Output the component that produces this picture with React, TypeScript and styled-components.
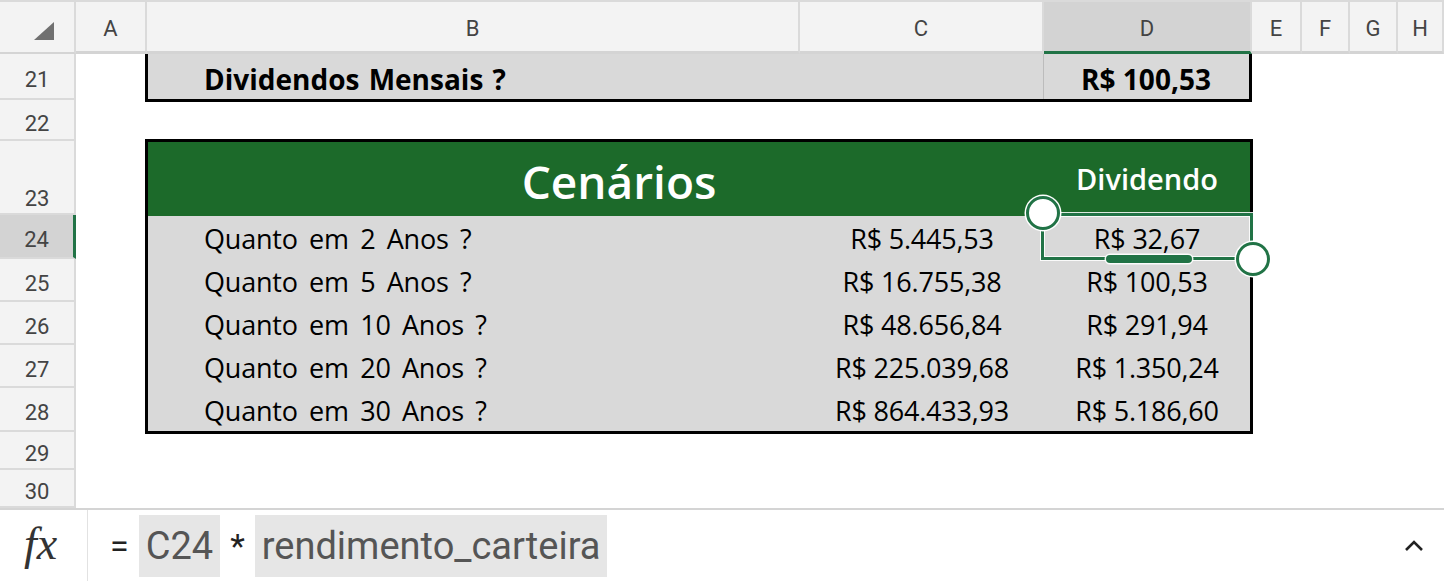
import React from "react";
import styled, { createGlobalStyle, css } from "styled-components";

const Global = createGlobalStyle`
  html, body { margin: 0; padding: 0; background: #ffffff; }
  body { width: 1444px; height: 581px; overflow: hidden; font-family: Roboto, "Noto Sans", sans-serif; }
  #root { width: 1444px; height: 581px; display: flex; flex-direction: column; }
`;

const GREEN = "#217346";
const HEAD_GREEN = "#1c6a2a";
const CELL_FONT = `"Open Sans", "Noto Sans", sans-serif`;

const COL_WIDTHS = [76, 71, 653, 244, 208, 50, 48, 48, 46];
const ROW_HEIGHTS = [54, 46, 41, 74, 44, 43, 43, 43, 44, 38, 38];

const Sheet = styled.div`
  position: relative;
  display: grid;
  grid-template-columns: ${COL_WIDTHS.map((w) => `${w}px`).join(" ")};
  grid-template-rows: ${ROW_HEIGHTS.map((h) => `${h}px`).join(" ")};
  height: 508px;
  overflow: hidden;
  background: #fff;
`;

const Corner = styled.div`
  grid-column: 1;
  grid-row: 1;
  background: #f3f3f3;
  border-top: 2px solid #dadada;
  border-right: 2px solid #dadada;
  border-bottom: 2px solid #d4d4d4;
  box-sizing: border-box;
  display: flex;
  align-items: center;
  justify-content: center;
`;

const ColHead = styled.div<{ $col: number; $active?: boolean }>`
  grid-column: ${(p) => p.$col};
  grid-row: 1;
  box-sizing: border-box;
  border-top: 2px solid #dadada;
  border-right: 2px solid #dadada;
  border-bottom: 3px solid ${(p) => (p.$active ? GREEN : "#d4d4d4")};
  background: ${(p) => (p.$active ? "#d3d3d3" : "#f3f3f3")};
  color: #444;
  font-family: Roboto, sans-serif;
  font-size: 22px;
  display: flex;
  align-items: center;
  justify-content: center;
  padding-top: 4px;
`;

const RowHead = styled.div<{ $row: number; $active?: boolean; $tall?: boolean }>`
  grid-column: 1;
  grid-row: ${(p) => p.$row};
  box-sizing: border-box;
  border-bottom: 2px solid #dadada;
  border-right: ${(p) => (p.$active ? `3px solid ${GREEN}` : "2px solid #dadada")};
  background: ${(p) => (p.$active ? "#d3d3d3" : "#f3f3f3")};
  color: #444;
  font-family: Roboto, sans-serif;
  font-size: 22px;
  line-height: 1;
  display: flex;
  justify-content: center;
  align-items: ${(p) => (p.$tall ? "flex-end" : "center")};
  padding: ${(p) => (p.$tall ? "0 0 3px 0" : "8px 0 0 0")};
`;

const SummaryTable = styled.div`
  grid-column: 3 / 6;
  grid-row: 2;
  align-self: start;
  margin-left: -2px;
  width: 1101px;
  height: 45px;
  border: 3px solid #000;
  border-top: none;
  background: #d9d9d9;
  display: grid;
  grid-template-columns: 652px 243px 206px;
  font-family: ${CELL_FONT};
  color: #000;
`;

const ScenarioTable = styled.div`
  grid-column: 3 / 6;
  grid-row: 4 / 10;
  align-self: start;
  margin: -2px 0 0 -2px;
  width: 1102px;
  border: 3px solid #000;
  background: #d9d9d9;
  display: grid;
  grid-template-columns: 652px 244px 206px;
  grid-template-rows: 74px 44px 43px 43px 43px 42px;
  font-family: ${CELL_FONT};
  color: #000;
`;

const Cell = styled.div<{ $align?: "left" | "center"; $bold?: boolean; $divider?: boolean }>`
  display: flex;
  align-items: center;
  justify-content: ${(p) => (p.$align === "left" ? "flex-start" : "center")};
  padding-left: ${(p) => (p.$align === "left" ? "56px" : "0")};
  padding-top: ${(p) => (p.$bold ? "5px" : "0")};
  font-size: ${(p) => (p.$bold ? "28px" : "27px")};
  word-spacing: ${(p) => (p.$align === "left" ? (p.$bold ? "2px" : "4.5px") : "0")};
  font-weight: ${(p) => (p.$bold ? 700 : 400)};
  letter-spacing: ${(p) => (p.$bold ? "0" : "-0.2px")};
  white-space: nowrap;
  ${(p) =>
    p.$divider &&
    css`
      box-shadow: inset 1px 0 0 #bcbcbc;
    `}
`;

const HeaderBand = styled.div`
  grid-column: 1 / 4;
  grid-row: 1;
  background: ${HEAD_GREEN};
  display: grid;
  grid-template-columns: 896px 206px;
  color: #fff;
`;

const Title = styled.div`
  display: flex;
  align-items: center;
  justify-content: center;
  padding-left: 46px;
  font-size: 46px;
  font-weight: 600;
  padding-top: 4px;
`;

const SubTitle = styled.div`
  display: flex;
  align-items: center;
  justify-content: center;
  font-size: 29px;
  font-weight: 600;
  padding-bottom: 1px;
`;

const SelectionBox = styled.div`
  position: absolute;
  left: 1041px;
  top: 213px;
  width: 212px;
  height: 47px;
  box-sizing: border-box;
  border: 3px solid ${GREEN};
  box-shadow: 0 0 0 1px rgba(255, 255, 255, 0.85), inset 0 0 0 1px rgba(255, 255, 255, 0.85);
  pointer-events: none;
`;

const Handle = styled.div<{ $x: number; $y: number }>`
  position: absolute;
  left: ${(p) => p.$x - 17}px;
  top: ${(p) => p.$y - 17}px;
  width: 34px;
  height: 34px;
  box-sizing: border-box;
  border-radius: 50%;
  background: #fff;
  border: 3px solid ${GREEN};
  box-shadow: 0 0 0 1.5px #fff;
`;

const FillBar = styled.div`
  position: absolute;
  left: 1106px;
  top: 255px;
  width: 86px;
  height: 8px;
  border-radius: 4px;
  background: ${GREEN};
  box-shadow: 0 0 0 1.5px rgba(255, 255, 255, 0.9);
`;

const FormulaBar = styled.div`
  height: 73px;
  box-sizing: border-box;
  border-top: 2px solid #d4d4d4;
  display: flex;
  align-items: stretch;
  background: #fff;
`;

const FxBox = styled.div`
  width: 88px;
  box-sizing: border-box;
  border-right: 1px solid #e2e2e2;
  display: flex;
  align-items: center;
  justify-content: center;
  font-family: "Liberation Serif", "DejaVu Serif", serif;
  font-style: italic;
  font-size: 46px;
  color: #333;
  padding-right: 6px;
  padding-bottom: 4px;
`;

const Formula = styled.div`
  flex: 1;
  display: flex;
  align-items: center;
  gap: 10px;
  padding-left: 22px;
  font-family: Roboto, sans-serif;
  font-size: 38px;
  color: #555;
`;

const Op = styled.span`
  color: #222;
  font-size: 34px;
`;

const Chip = styled.span`
  background: #e6e6e6;
  height: 62px;
  display: flex;
  align-items: center;
  padding: 0 7px;
`;

const Collapse = styled.div`
  width: 60px;
  display: flex;
  align-items: center;
  justify-content: center;
  padding-left: 6px;
`;

const columns = ["A", "B", "C", "D", "E", "F", "G", "H"];
const rowNums = [21, 22, 23, 24, 25, 26, 27, 28, 29, 30];

const scenarios = [
  { label: "Quanto em 2 Anos ?", total: "R$ 5.445,53", div: "R$ 32,67" },
  { label: "Quanto em 5 Anos ?", total: "R$ 16.755,38", div: "R$ 100,53" },
  { label: "Quanto em 10 Anos ?", total: "R$ 48.656,84", div: "R$ 291,94" },
  { label: "Quanto em 20 Anos ?", total: "R$ 225.039,68", div: "R$ 1.350,24" },
  { label: "Quanto em 30 Anos ?", total: "R$ 864.433,93", div: "R$ 5.186,60" },
];

export default function App() {
  return (
    <>
      <Global />
      <Sheet>
        <Corner>
          <svg width="22" height="20" viewBox="0 0 22 20" style={{ marginLeft: 14, marginTop: 8 }}>
            <polygon points="1,19 21,19 21,1" fill="#707070" />
          </svg>
        </Corner>
        {columns.map((c, i) => (
          <ColHead key={c} $col={i + 2} $active={c === "D"}>
            {c}
          </ColHead>
        ))}
        {rowNums.map((r, i) => (
          <RowHead key={r} $row={i + 2} $active={r === 24} $tall={r === 23}>
            {r}
          </RowHead>
        ))}

        <SummaryTable>
          <Cell $align="left" $bold>
            Dividendos Mensais ?
          </Cell>
          <Cell />
          <Cell $bold $divider>
            R$ 100,53
          </Cell>
        </SummaryTable>

        <ScenarioTable>
          <HeaderBand>
            <Title>Cenários</Title>
            <SubTitle>Dividendo</SubTitle>
          </HeaderBand>
          {scenarios.map((s) => (
            <React.Fragment key={s.label}>
              <Cell $align="left">{s.label}</Cell>
              <Cell>{s.total}</Cell>
              <Cell>{s.div}</Cell>
            </React.Fragment>
          ))}
        </ScenarioTable>

        <SelectionBox />
        <FillBar />
        <Handle $x={1043} $y={213} />
        <Handle $x={1253} $y={259} />
      </Sheet>

      <FormulaBar>
        <FxBox>fx</FxBox>
        <Formula>
          <Op>=</Op>
          <Chip>C24</Chip>
          <Op>*</Op>
          <Chip>rendimento_carteira</Chip>
        </Formula>
        <Collapse>
          <svg width="20" height="12" viewBox="0 0 20 12">
            <polyline points="2,10 10,2 18,10" fill="none" stroke="#222" strokeWidth="2.6" />
          </svg>
        </Collapse>
      </FormulaBar>
    </>
  );
}
